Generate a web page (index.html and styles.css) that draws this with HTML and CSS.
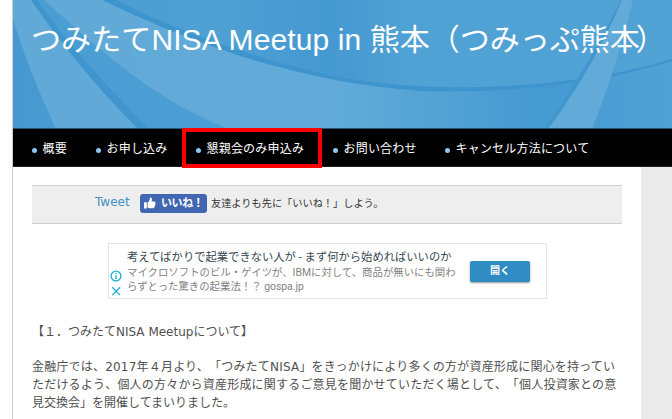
FILE: index.html
```html
<!DOCTYPE html>
<html lang="ja">
<head>
<meta charset="utf-8">
<title>つみたてNISA Meetup in 熊本</title>
<link rel="stylesheet" href="styles.css">
</head>
<body>
<div class="page">
  <header class="header">
    <svg class="header-art" width="659" height="129" viewBox="13 0 659 129" aria-hidden="true">
      <defs>
        <linearGradient id="sky" x1="0" x2="1" y1="0" y2="0">
          <stop offset="0" stop-color="#4599d0"/><stop offset=".3" stop-color="#4fa1d4"/><stop offset=".48" stop-color="#4599d1"/><stop offset=".6" stop-color="#50a1d4"/><stop offset="1" stop-color="#50a1d4"/>
        </linearGradient>
        <linearGradient id="band" gradientUnits="userSpaceOnUse" x1="44" x2="672" y1="0" y2="0">
          <stop offset="0" stop-color="#61aad8"/><stop offset=".46" stop-color="#62abd9"/><stop offset=".6" stop-color="#55a4d5"/><stop offset=".79" stop-color="#459ad2"/><stop offset="1" stop-color="#50a1d4"/>
        </linearGradient>
      </defs>
      <rect x="13" width="659" height="129" fill="url(#sky)"/>
      <path d="M44 0H104C180 35 260 66 345 82Q450 100 590 77Q640 70 672 59V129H228C158 101 107 58 44 0Z" fill="url(#band)"/>
      <path d="M102 0H115Q225 54 345 78Q450 96 580 79Q630 72 672 59V61Q560 95 420 91Q330 84 240 56Q165 31 102 0Z" fill="#3e94cd"/>
      <path d="M31 0H44C107 58 158 101 228 129H138Q78 69 31 0Z" fill="#4a9ed3"/>
      <path d="M31 0H37Q80 60 149 129H138Q78 69 31 0Z" fill="#3f96ce"/>
      <path d="M13 0H31Q78 69 138 129H56Q31 76 13 20Z" fill="#61aad8"/>
      <path d="M621 0Q590 65 544 129H549Q596 63 624 0Z" fill="#4096cf"/>
      <path d="M622 0H633Q617 67 592 129H548Q594 67 622 0Z" fill="#62abd9"/>
      <path d="M13 128.500H672" stroke="#235777"/>
    </svg>
    <h1 class="title">つみたてNISA Meetup in <span class="city">熊本（つみっぷ熊<span class="tail">本</span>）</span></h1>
  </header>
  <nav class="nav">
    <a class="nav-item summary">概要</a>
    <a class="nav-item apply">お申し込み</a>
    <a class="nav-item party">懇親会のみ申込み<span class="highlight"></span></a>
    <a class="nav-item contact">お問い合わせ</a>
    <a class="nav-item cancel">キャンセル方法について</a>
  </nav>
  <div class="columns">
    <main class="main">
      <div class="share">
        <a class="tweet">Tweet</a>
        <span class="like">
          <svg width="12" height="12" viewBox="0 0 12 12" fill="#fff" aria-hidden="true"><path d="M0 5.200h2.800V11.500H0zM3.600 5.500Q5.700 4 5.800 2V.5Q8 .1 8 2.600L7.600 4.500H10.300Q11.900 4.700 11.300 6.200Q12 7.200 11 8.100Q11.400 9.100 10.400 9.700Q10.500 11 9 11.200H5.700Q4.500 11.200 3.600 10.500Z"/></svg>
          <b>いいね！</b>
        </span>
        <span class="share-note">友達よりも先に「いいね！」しよう。</span>
      </div>
      <section class="ad">
        <div class="ad-icons">
          <svg width="12" height="28" viewBox="0 0 12 28" fill="none" stroke="#1aaed4" stroke-width="1.300" aria-hidden="true"><circle cx="6" cy="6" r="4.900"/><path d="M6 5V9.200M6 2.700V4M2.300 17.300l7.800 7.800M10.100 17.300l-7.800 7.800"/></svg>
        </div>
        <div class="ad-copy">
          <div class="ad-title">考えてばかりで起業できない人が - まず何から始めればいいのか</div>
          <div class="ad-text">マイクロソフトのビル・ゲイツが、IBMに対して、商品が無いにも関わ</div>
          <div class="ad-text">らずとった驚きの起業法！？ gospa.jp</div>
        </div>
        <a class="ad-button">開く</a>
      </section>
      <article class="article">
        <h2 class="heading">【１．つみたてNISA Meetupについて】</h2>
        <p class="body-text"><span class="line">金融庁では、2017年４月より、「つみたてNISA」をきっかけにより多くの方が資産形成に関心を持ってい</span><span class="line">ただけるよう、個人の方々から資産形成に関するご意見を聞かせていただく場として、「個人投資家との意</span><span class="line last">見交換会」を開催してまいりました。</span></p>
      </article>
    </main>
    <aside class="side"></aside>
  </div>
</div>
</body>
</html>
```
FILE: styles.css
```css
* { box-sizing: border-box; }
body { margin: 0; background: #fff; overflow: hidden; color: #505050; font: 12px/18px "DejaVu Sans", "Noto Sans CJK JP", sans-serif; text-spacing-trim: space-all; }
.page { height: 419px; margin-left: 12px; border-left: 1px solid #cfcfcf; display: flex; flex-direction: column; }
.header { position: relative; height: 129px; padding: 18px 0 0 18px; flex: none; }
.header-art { position: absolute; left: 0; top: 0; }
.title { position: relative; margin: 0; color: #fff; font: 400 30px/44px "Liberation Sans", "Noto Sans CJK JP", sans-serif; white-space: nowrap; letter-spacing: .1px; }
.city { letter-spacing: 0; }
.tail { letter-spacing: -4px; }
.nav { height: 38px; flex: none; background: #000; display: flex; padding-left: 19px; border-bottom: 1px solid #222; }
.nav-item { position: relative; color: #fff; white-space: nowrap; line-height: 38px; letter-spacing: .2px; display: flex; align-items: center; gap: 5.500px; padding-top: 2px; }
.nav-item::before { content: ""; width: 5px; height: 5px; border-radius: 50%; background: #8bc7ee; margin-top: 3px; }
.summary { width: 64px; }
.apply { width: 100px; }
.party { width: 137px; }
.contact { width: 112px; }
.highlight { position: absolute; left: -14px; top: -1px; width: 140px; height: 40px; border: 4px solid #fe0000; z-index: 1; }
.columns { display: flex; flex: 1; min-height: 0; }
.main { width: 628px; padding: 18px 19px 0; }
.side { flex: 1; background: #ebebeb; }
.share { height: 39px; background: #eee; border-top: 1px solid #cdcdcd; border-bottom: 1px solid #cdcdcd; display: flex; align-items: flex-start; padding: 8px 0 0 63px; }
.tweet { color: #3e92c4; width: 45px; line-height: 17px; font-size: 12px; }
.like { width: 67px; height: 19px; border-radius: 3px; background: #4267b2; color: #fff; display: flex; align-items: center; padding-left: 4px; gap: 5px; font-size: 11px; white-space: nowrap; }
.like svg { flex: none; margin-top: -2px; }
.like b { line-height: 19px; letter-spacing: -.4px; }
.share-note { margin-left: 4px; font-size: 10.200px; line-height: 19px; color: #333; white-space: nowrap; }
.ad { margin: 19px 0 0 76px; width: 439px; height: 56px; border: 1px solid #e4e4e4; display: flex; font-family: Roboto, "Noto Sans CJK JP", sans-serif; white-space: nowrap; }
.ad-icons { width: 18px; padding: 26px 0 0 1px; }
.ad-icons svg { display: block; }
.ad-copy { width: 343px; padding-top: 6px; }
.ad-title { font-size: 11.300px; line-height: 16px; color: #37474f; }
.ad-text { font-size: 10.400px; line-height: 13.500px; color: #828282; }
.ad-button { width: 60px; height: 21px; margin-top: 17px; border-radius: 2px; background: #2f8bc1; box-shadow: 0 1px 2px #999; color: #fff; font-size: 10px; font-weight: 700; line-height: 19px; text-align: center; }
.heading { margin: 24px 0 0; font-size: 12px; line-height: 18px; font-weight: 400; white-space: nowrap; }
.body-text { margin: 17px 0 0; }
.line { display: block; white-space: nowrap; letter-spacing: .2px; }
.last { letter-spacing: 0; }
```
